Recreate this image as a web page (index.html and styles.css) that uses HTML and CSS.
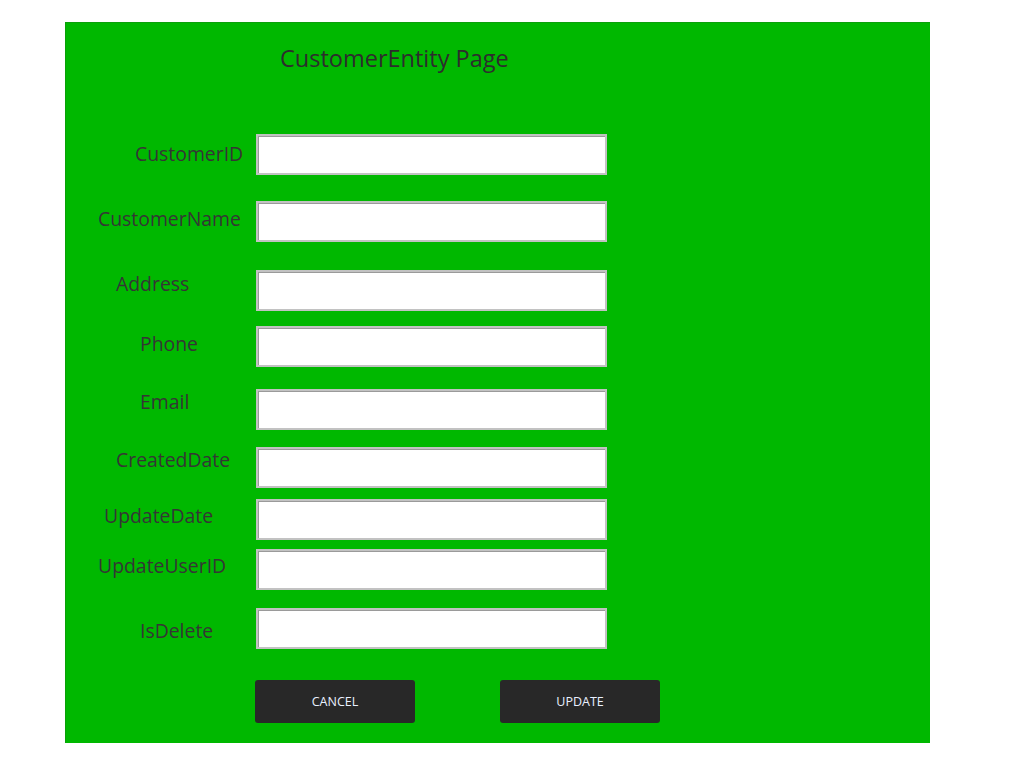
FILE: index.html
```html
<!DOCTYPE html>
<html lang="en">
<head>
<meta charset="utf-8">
<title>CustomerEntity Page</title>
<link rel="stylesheet" href="styles.css">
</head>
<body>
<div class="panel">
  <h1 class="title">CustomerEntity Page</h1>
  <form class="form">
    <div class="field field--id">
      <label class="field__label">CustomerID</label>
      <input class="field__input" type="text">
    </div>
    <div class="field field--name">
      <label class="field__label">CustomerName</label>
      <input class="field__input" type="text">
    </div>
    <div class="field field--address">
      <label class="field__label">Address</label>
      <input class="field__input" type="text">
    </div>
    <div class="field field--phone">
      <label class="field__label">Phone</label>
      <input class="field__input" type="text">
    </div>
    <div class="field field--email">
      <label class="field__label">Email</label>
      <input class="field__input" type="text">
    </div>
    <div class="field field--created">
      <label class="field__label">CreatedDate</label>
      <input class="field__input" type="text">
    </div>
    <div class="field field--updated">
      <label class="field__label">UpdateDate</label>
      <input class="field__input" type="text">
    </div>
    <div class="field field--user">
      <label class="field__label">UpdateUserID</label>
      <input class="field__input" type="text">
    </div>
    <div class="field field--deleted">
      <label class="field__label">IsDelete</label>
      <input class="field__input" type="text">
    </div>
    <div class="actions">
      <button type="button" class="btn">CANCEL</button>
      <button type="button" class="btn">UPDATE</button>
    </div>
  </form>
</div>
</body>
</html>
```

FILE: styles.css
```css
* { box-sizing: border-box; }

body {
  margin: 0;
  background: #ffffff;
  font-family: "Open Sans", "Noto Sans", sans-serif;
}

.panel {
  margin: 22px 0 0 65px;
  width: 865px;
  height: 721px;
  background: #00b800;
  border-top: 1px solid #0aa00a;
  border-left: 1px solid #0aa00a;
}

.title {
  margin: 0;
  padding: 20px 0 0 214px;
  font-size: 23.5px;
  line-height: 30px;
  font-weight: 400;
  color: #2d2d2d;
}

.form {
  margin-top: 61px;
  display: flex;
  flex-direction: column;
}

.field {
  display: flex;
  align-items: flex-start;
  height: 41px;
}

.field__label {
  width: 190px;
  font-size: 19.4px;
  line-height: 24px;
  color: #353535;
  white-space: nowrap;
}

.field__input {
  width: 351px;
  height: 41px;
  margin: 0;
  padding: 0 6px;
  background: #ffffff;
  border: 2px solid #c2c2c2;
  box-shadow: inset 1px 1px 0 #9a9a9a;
  font: inherit;
  outline: none;
}

.field--id      { margin-top: 0; }
.field--name    { margin-top: 26px; }
.field--address { margin-top: 28px; }
.field--phone   { margin-top: 15px; }
.field--email   { margin-top: 22px; }
.field--created { margin-top: 17px; }
.field--updated { margin-top: 11px; }
.field--user    { margin-top: 9px; }
.field--deleted { margin-top: 18px; }

.field--id .field__label      { padding: 8px 0 0 69px; }
.field--name .field__label    { padding: 6px 0 0 32px; }
.field--address .field__label { padding: 2px 0 0 50px; }
.field--phone .field__label   { padding: 6px 0 0 74px; }
.field--email .field__label   { padding: 1px 0 0 74px; }
.field--created .field__label { padding: 1px 0 0 50px; }
.field--updated .field__label { padding: 5px 0 0 38px; }
.field--user .field__label    { padding: 5px 0 0 32px; }
.field--deleted .field__label { padding: 11px 0 0 74px; }

.actions {
  display: flex;
  gap: 85px;
  margin-top: 31px;
  padding-left: 189px;
}

.btn {
  width: 160px;
  height: 43px;
  margin: 0;
  padding: 0;
  border: none;
  border-radius: 3px;
  background: #282828;
  color: #e8f0ff;
  font-family: "Open Sans", "Noto Sans", sans-serif;
  font-size: 12.5px;
  cursor: pointer;
}
```
